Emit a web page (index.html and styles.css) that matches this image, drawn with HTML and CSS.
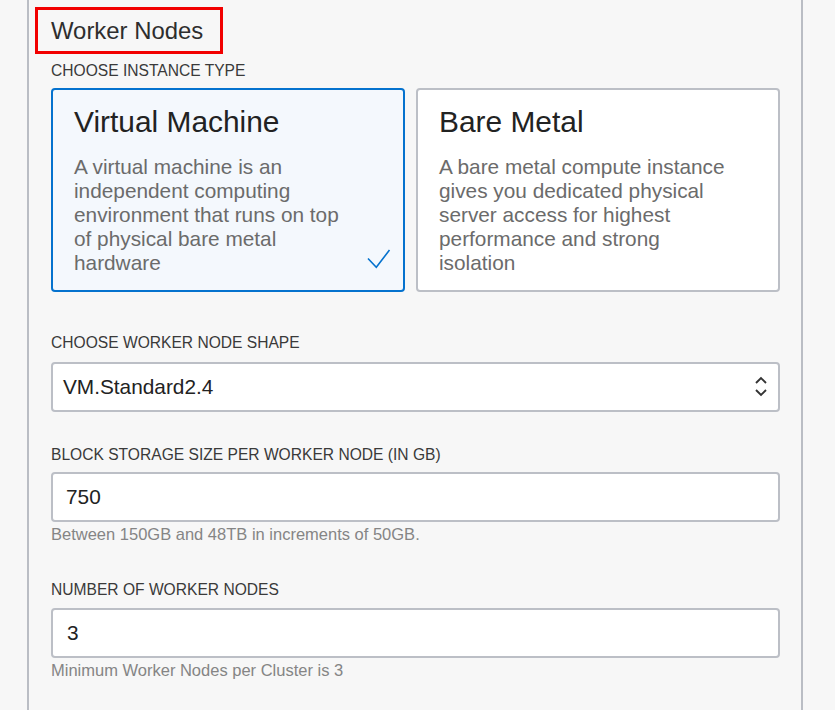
FILE: index.html
```html
<!DOCTYPE html>
<html lang="en">
<head>
<meta charset="utf-8">
<title>Worker Nodes</title>
<link rel="stylesheet" href="styles.css">
</head>
<body>
<div class="panel">
  <h2 class="heading">Worker Nodes</h2>
  <div class="label label-first">CHOOSE INSTANCE TYPE</div>
  <div class="cards">
    <div class="card card-selected">
      <div class="card-title">Virtual Machine</div>
      <div class="card-desc">A virtual machine is an independent computing environment that runs on top of physical bare metal hardware</div>
      <svg class="check" width="24" height="20" viewBox="0 0 24 20"><polyline points="1,9.5 9.3,18.3 22.5,1" fill="none" stroke="#0572ce" stroke-width="1.6"/></svg>
    </div>
    <div class="card">
      <div class="card-title">Bare Metal</div>
      <div class="card-desc">A bare metal compute instance gives you dedicated physical server access for highest performance and strong isolation</div>
    </div>
  </div>

  <div class="label label-shape">CHOOSE WORKER NODE SHAPE</div>
  <div class="field select">
    <span class="field-value select-value">VM.Standard2.4</span>
    <svg class="arrows" width="14" height="22" viewBox="0 0 14 22"><polyline points="2,7 7,2 12,7" fill="none" stroke="#333" stroke-width="1.9"/><polyline points="2,14 7,19 12,14" fill="none" stroke="#333" stroke-width="1.9"/></svg>
  </div>

  <div class="label label-storage">BLOCK STORAGE SIZE PER WORKER NODE (IN GB)</div>
  <div class="field input"><span class="field-value">750</span></div>
  <div class="help">Between 150GB and 48TB in increments of 50GB.</div>

  <div class="label label-count">NUMBER OF WORKER NODES</div>
  <div class="field input"><span class="field-value num">3</span></div>
  <div class="help">Minimum Worker Nodes per Cluster is 3</div>
</div>
</body>
</html>
```
FILE: styles.css
```css
html, body {
  margin: 0;
  padding: 0;
  background: #f7f7f7;
  font-family: "Liberation Sans", Arial, sans-serif;
  overflow: hidden;
}

.panel {
  margin-left: 27px;
  width: 729px;
  min-height: 710px;
  border-left: 2px solid #babdc4;
  border-right: 2px solid #babdc4;
  padding: 7px 21px 0 22px;
  box-sizing: content-box;
}

.heading {
  display: inline-block;
  margin: 0 0 0 -16px;
  padding: 1px 17px 0 13px;
  border: 3px solid #f20000;
  font-size: 23.9px;
  line-height: 40px;
  font-weight: normal;
  color: #2e2e2e;
}

.label {
  font-size: 15.6px;
  line-height: 18px;
  color: #3a3a3a;
}

.label-first { margin-top: 8px; margin-bottom: 8px; }
.label-shape { margin-top: 42px; margin-bottom: 10px; }
.label-storage { margin-top: 34px; margin-bottom: 8px; }
.label-count { margin-top: 37px; margin-bottom: 9px; }

.cards {
  display: grid;
  grid-template-columns: 354px 364px;
  column-gap: 11px;
}

.card {
  position: relative;
  background: #ffffff;
  border: 2px solid #bcbfc6;
  border-radius: 4px;
  padding: 14px 46px 15px 21px;
}

.card-selected {
  background: #f4f8fd;
  border-color: #0572ce;
}

.card-title {
  font-size: 29.9px;
  line-height: 36px;
  color: #222222;
}

.card-desc {
  margin-top: 15px;
  font-size: 20.8px;
  line-height: 24px;
  color: #6b6b6b;
}

.check {
  position: absolute;
  right: 12px;
  bottom: 21px;
}

.field {
  display: flex;
  align-items: center;
  height: 46px;
  background: #ffffff;
  border: 2px solid #bcbfc6;
  border-radius: 4px;
}

.field-value {
  padding-left: 13px;
  font-size: 20.8px;
  line-height: 24px;
  color: #222222;
}

.field-value.num { padding-left: 14px; }

.select-value { padding-left: 10px; }

.arrows {
  margin-left: auto;
  margin-right: 10px;
}

.help {
  margin-top: 3px;
  font-size: 16.5px;
  line-height: 19px;
  color: #858585;
}
```
